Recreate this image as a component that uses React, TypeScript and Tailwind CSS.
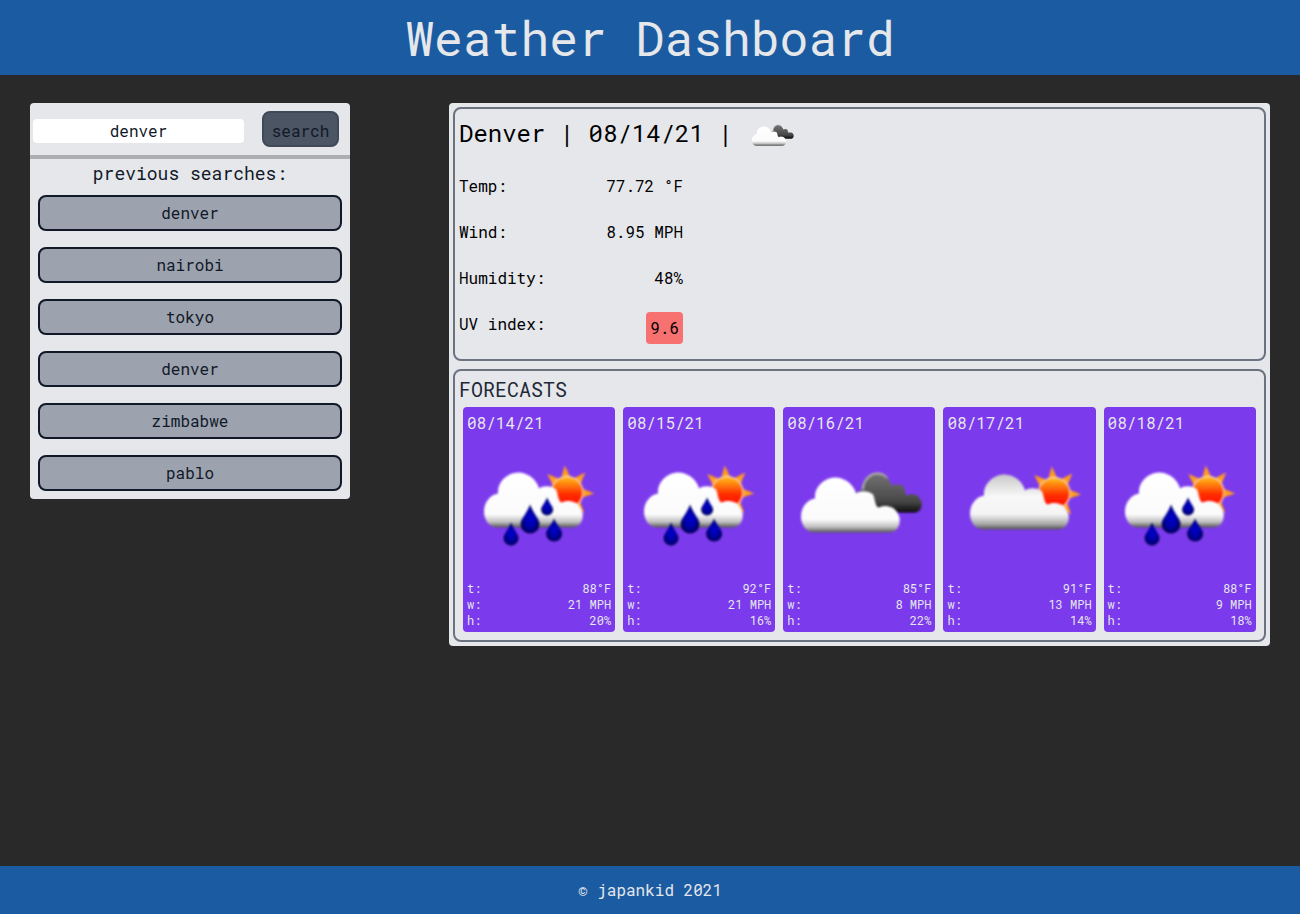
const CLOUD =
  "M32 92C23 93 17 85 17 76C17 66 24 59 31 58C30 46 41 37 51 37C62 37 70 45 72 53C76 50 84 50 89 54C91 59 91 65 94 67C100 64 110 65 113 72C118 78 116 91 106 92Z";

function Defs() {
  return (
    <defs>
      <filter id="soft" x="-10%" y="-10%" width="120%" height="120%">
        <feGaussianBlur stdDeviation="1.1" />
      </filter>
      <linearGradient id="cloudWhite" x1="0" y1="0" x2="0" y2="1">
        <stop offset="0" stopColor="#ffffff" />
        <stop offset="0.76" stopColor="#fbfbfb" />
        <stop offset="0.9" stopColor="#bdbdbd" />
        <stop offset="1" stopColor="#4f4f4f" />
      </linearGradient>
      <linearGradient id="cloudGrey" x1="0" y1="0" x2="0" y2="1">
        <stop offset="0" stopColor="#c8c8c8" />
        <stop offset="0.4" stopColor="#f8f8f8" />
        <stop offset="0.72" stopColor="#f4f4f4" />
        <stop offset="0.9" stopColor="#a8a8a8" />
        <stop offset="1" stopColor="#4f4f4f" />
      </linearGradient>
      <linearGradient id="cloudDark" x1="0" y1="0" x2="0" y2="1">
        <stop offset="0" stopColor="#707070" />
        <stop offset="0.7" stopColor="#484848" />
        <stop offset="1" stopColor="#0c0c0c" />
      </linearGradient>
      <linearGradient id="sunFill" x1="0" y1="0" x2="0" y2="1">
        <stop offset="0" stopColor="#ffc21a" />
        <stop offset="0.55" stopColor="#ff3000" />
        <stop offset="1" stopColor="#ff0000" />
      </linearGradient>
      <radialGradient id="dropFill">
        <stop offset="0" stopColor="#0000d0" />
        <stop offset="0.7" stopColor="#00009a" />
        <stop offset="1" stopColor="#000050" />
      </radialGradient>
    </defs>
  );
}

function Sun({ cx, cy }: { cx: number; cy: number }) {
  const point = (deg: number, r: number) => {
    const a = (deg * Math.PI) / 180;
    return `${cx + Math.cos(a) * r},${cy + Math.sin(a) * r}`;
  };
  return (
    <g filter="url(#soft)">
      {[-137, -95, -48, 2, 51].map((deg) => (
        <polygon
          key={deg}
          fill="#ff9d1f"
          points={`${point(deg - 22, 14)} ${point(deg, 27)} ${point(deg + 22, 14)}`}
        />
      ))}
      <circle cx={cx} cy={cy} r="16" fill="url(#sunFill)" stroke="#ffe0a8" strokeWidth="1" />
    </g>
  );
}

function Drop({ cx, top, bottom, w }: { cx: number; top: number; bottom: number; w: number }) {
  const r = w / 2;
  const cy = bottom - r;
  const mid = top + (cy - top) * 0.5;
  const d = `M${cx} ${top}C${cx + r * 0.4} ${mid} ${cx + r} ${cy - r * 0.5} ${cx + r} ${cy}A${r} ${r} 0 1 1 ${cx - r} ${cy}C${cx - r} ${cy - r * 0.5} ${cx - r * 0.4} ${mid} ${cx} ${top}Z`;
  return <path d={d} fill="url(#dropFill)" filter="url(#soft)" />;
}

function RainIcon() {
  return (
    <svg viewBox="0 0 144 144" className="w-full h-[145px]">
      <Defs />
      <Sun cx={100} cy={57} />
      <path d={CLOUD} fill="url(#cloudWhite)" filter="url(#soft)" />
      <Drop cx={63} top={69} bottom={98} w={19} />
      <Drop cx={80} top={62} bottom={80} w={12} />
      <Drop cx={44} top={87} bottom={110} w={15} />
      <Drop cx={87} top={83} bottom={106} w={16} />
    </svg>
  );
}

function SunCloudIcon() {
  return (
    <svg viewBox="0 0 144 144" className="w-full h-[145px]">
      <Defs />
      <Sun cx={107} cy={58} />
      <path d={CLOUD} transform="translate(6 2)" fill="url(#cloudGrey)" filter="url(#soft)" />
    </svg>
  );
}

function DarkCloudIcon({ className }: { className: string }) {
  return (
    <svg viewBox="0 0 144 144" className={className}>
      <Defs />
      <g filter="url(#soft)">
        <circle cx="89" cy="51" r="13" fill="#5a5a5a" />
        <path d="M76 56C75 47 82 38 90 38C94 38 98 40 100 43" fill="none" stroke="#a8a8a8" strokeWidth="2.5" />
        <path d={CLOUD} transform="translate(56 14.4) scale(0.68)" fill="url(#cloudDark)" />
      </g>
      <path d={CLOUD} transform="translate(-3 5)" fill="url(#cloudWhite)" filter="url(#soft)" />
    </svg>
  );
}

const history = ["denver", "nairobi", "tokyo", "denver", "zimbabwe", "pablo"];

const forecasts = [
  { date: "08/14/21", icon: "rain", t: "88°F", w: "21 MPH", h: "20%" },
  { date: "08/15/21", icon: "rain", t: "92°F", w: "21 MPH", h: "16%" },
  { date: "08/16/21", icon: "dark", t: "85°F", w: "8 MPH", h: "22%" },
  { date: "08/17/21", icon: "sun", t: "91°F", w: "13 MPH", h: "14%" },
  { date: "08/18/21", icon: "rain", t: "88°F", w: "9 MPH", h: "18%" },
];

function StatRow({ label, value }: { label: string; value: string }) {
  return (
    <div className="flex justify-between w-[224px] h-[46px] pt-[10px]">
      <span>{label}</span>
      <span>{value}</span>
    </div>
  );
}

export default function App() {
  return (
    <div className="min-h-screen flex flex-col bg-[#292929] font-['Roboto_Mono','DejaVu_Sans_Mono',monospace] text-base text-[#111827]">
      <header className="h-[75px] bg-[#1b5ba2] flex items-center justify-center">
        <h1 className="text-5xl text-[#e5e7eb]">Weather Dashboard</h1>
      </header>

      <main className="flex-1 flex items-start justify-between pt-7 px-[30px]">
        {/* Search panel */}
        <aside className="w-[320px] bg-[#e5e7eb] rounded">
          <div className="h-[52px] flex items-center pl-[3px]">
            <input
              readOnly
              value="denver"
              className="w-[211px] h-6 mt-1 bg-white rounded text-center outline-none"
            />
            <button className="ml-[18px] w-[77px] h-9 pt-1 bg-[#4b5563] border-2 border-[#3f4957] rounded-lg">
              search
            </button>
          </div>
          <div className="h-1 bg-[#adaeb2]" />
          <p className="text-lg leading-7 text-center mb-2">previous searches:</p>
          <div className="flex flex-col gap-4 px-2 pb-2">
            {history.map((city, i) => (
              <button
                key={i}
                className="h-9 bg-[#9ca3af] border-2 border-[#111827] rounded-lg"
              >
                {city}
              </button>
            ))}
          </div>
        </aside>

        {/* Weather panel */}
        <section className="w-[821px] bg-[#e5e7eb] rounded p-1 flex flex-col gap-2 text-black">
          <div className="border-2 border-[#6b7280] rounded-lg h-[254px] pl-1">
            <div className="flex items-start h-[55px]">
              <h2 className="text-2xl leading-8 pt-2 whitespace-pre">Denver | 08/14/21 | </h2>
              <DarkCloudIcon className="w-[50px] h-[50px] mt-[3px]" />
            </div>
            <StatRow label="Temp:" value="77.72 °F" />
            <StatRow label="Wind:" value="8.95 MPH" />
            <StatRow label="Humidity:" value="48%" />
            <div className="flex justify-between w-[224px] h-[46px] pt-[10px]">
              <span>UV index:</span>
              <span className="h-8 p-1 bg-[#f87171] rounded">9.6</span>
            </div>
          </div>

          <div className="border-2 border-[#6b7280] rounded-lg pb-2">
            <h3 className="text-xl leading-7 text-[#1f2937] pl-1 pt-1 mb-1">FORECASTS</h3>
            <div className="grid grid-cols-5 gap-2 pl-2 pr-[8.25px]">
              {forecasts.map((day) => (
                <div key={day.date} className="bg-[#7c3aed] rounded p-1 text-[#e5e7eb]">
                  <div>{day.date}</div>
                  {day.icon === "rain" && <RainIcon />}
                  {day.icon === "sun" && <SunCloudIcon />}
                  {day.icon === "dark" && <DarkCloudIcon className="w-full h-[145px]" />}
                  <div className="text-xs leading-4">
                    <div className="flex justify-between"><span>t:</span><span>{day.t}</span></div>
                    <div className="flex justify-between"><span>w:</span><span>{day.w}</span></div>
                    <div className="flex justify-between"><span>h:</span><span>{day.h}</span></div>
                  </div>
                </div>
              ))}
            </div>
          </div>
        </section>
      </main>

      <footer className="h-12 bg-[#1b5ba2] flex items-center justify-center text-[#e5e7eb]">
        © japankid 2021
      </footer>
    </div>
  );
}
